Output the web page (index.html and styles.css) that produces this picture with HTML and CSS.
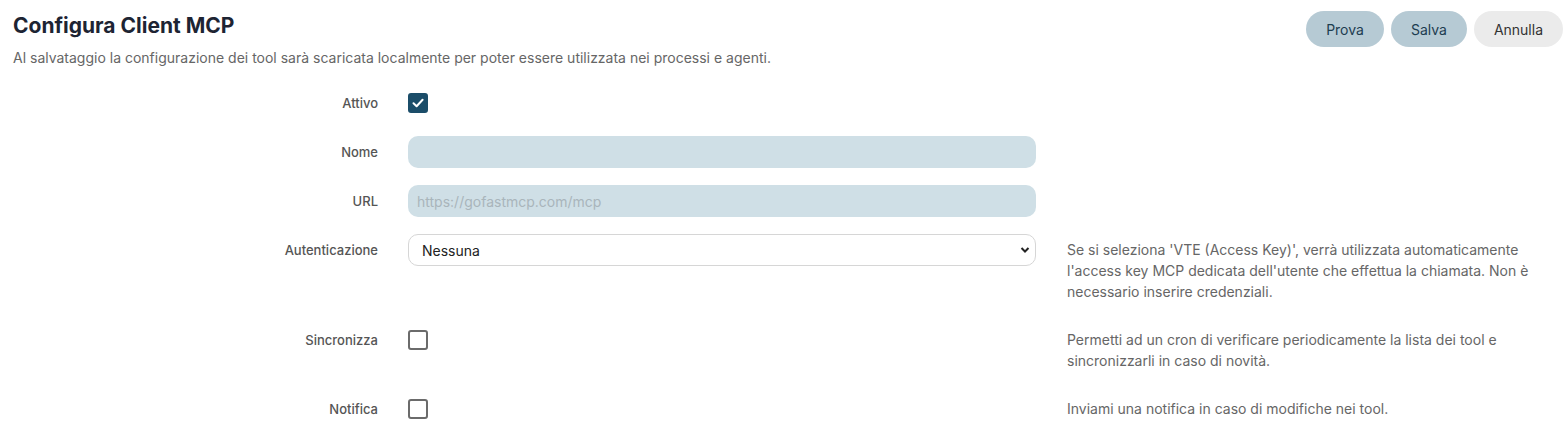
FILE: index.html
```html
<!DOCTYPE html>
<html lang="it">
<head>
    <meta charset="UTF-8">
    <meta name="viewport" content="width=device-width, initial-scale=1.0">
    <title>Configura Client MCP</title>
    <link rel="stylesheet" href="styles.css">
</head>
<body>
    <div class="header">
        <div class="titles">
            <h2>Configura Client MCP</h2>
            <p class="subtitle">Al salvataggio la configurazione dei tool sarà scaricata localmente per poter essere utilizzata nei processi e agenti.</p>
        </div>
        <div class="actions">
            <button class="btn btn-primary">Prova</button>
            <button class="btn btn-primary">Salva</button>
            <button class="btn btn-light">Annulla</button>
        </div>
    </div>

    <div class="form">
        <div class="row">
            <label class="row-label">Attivo</label>
            <div class="control check-wrap">
                <span class="check checked">
                    <svg width="14" height="14" viewBox="0 0 14 14"><path d="M2.5 7.3 L5.6 10.2 L11.6 3.8" fill="none" stroke="#fff" stroke-width="2" stroke-linecap="round" stroke-linejoin="round"/></svg>
                </span>
            </div>
            <div class="help"></div>
        </div>
        <div class="row">
            <label class="row-label">Nome</label>
            <div class="control"><input type="text" class="field"></div>
            <div class="help"></div>
        </div>
        <div class="row">
            <label class="row-label">URL</label>
            <div class="control"><input type="text" class="field" placeholder="https://gofastmcp.com/mcp"></div>
            <div class="help"></div>
        </div>
        <div class="row">
            <label class="row-label">Autenticazione</label>
            <div class="control select-wrap">
                <select class="select">
                    <option selected>Nessuna</option>
                    <option>VTE (Access Key)</option>
                </select>
                <svg class="chevron" width="10" height="8" viewBox="0 0 10 8"><path d="M1.5 2 L5 5.5 L8.5 2" fill="none" stroke="#222" stroke-width="2"/></svg>
            </div>
            <div class="help text">Se si seleziona 'VTE (Access Key)', verrà utilizzata automaticamente l'access key MCP dedicata dell'utente che effettua la chiamata. Non è necessario inserire credenziali.</div>
        </div>
        <div class="row">
            <label class="row-label">Sincronizza</label>
            <div class="control check-wrap"><span class="check"></span></div>
            <div class="help text">Permetti ad un cron di verificare periodicamente la lista dei tool e sincronizzarli in caso di novità.</div>
        </div>
        <div class="row">
            <label class="row-label">Notifica</label>
            <div class="control check-wrap"><span class="check"></span></div>
            <div class="help text">Inviami una notifica in caso di modifiche nei tool.</div>
        </div>
    </div>
</body>
</html>
```

FILE: styles.css
```css
body {
    font-family: Inter, "Noto Sans", sans-serif;
    background-color: #fff;
    color: #333;
    margin: 0;
    padding: 0 4px 0 13px;
}
.header {
    display: flex;
    justify-content: space-between;
    align-items: flex-start;
    padding-top: 11px;
    height: 76px;
}
h2 {
    font-size: 21px;
    font-weight: 700;
    color: #1d2433;
    margin: 2px 0 0;
    line-height: 26px;
}
.subtitle {
    font-size: 14px;
    color: #666;
    margin: 10px 0 0;
    line-height: 18px;
}
.actions {
    display: flex;
    gap: 7px;
    margin-right: -1px;
}
.btn {
    height: 36px;
    padding: 0 20px;
    border: none;
    border-radius: 18px;
    font-family: inherit;
    font-size: 14px;
    cursor: pointer;
}
.btn-primary {
    background-color: #b6cad4;
    color: #1d3d50;
}
.btn-light {
    background-color: #ebebeb;
    color: #333;
}
.form {
    display: flex;
    flex-direction: column;
    gap: 17px;
}
.row {
    display: grid;
    grid-template-columns: 365px 628px 1fr;
    column-gap: 30px;
    align-items: start;
}
.row-label {
    text-align: right;
    font-size: 13px;
    font-weight: 500;
    color: #555;
    line-height: 32px;
}
.control {
    height: 32px;
}
.help {
    margin-left: 1px;
}
.help.text {
    padding-top: 5px;
    padding-bottom: 5px;
    font-size: 14px;
    line-height: 21px;
    color: #666;
    padding-right: 10px;
}
.check-wrap {
    display: flex;
    align-items: center;
}
.check {
    width: 20px;
    height: 20px;
    box-sizing: border-box;
    border: 2px solid #6b6b6b;
    border-radius: 3px;
    display: flex;
    align-items: center;
    justify-content: center;
}
.check.checked {
    background-color: #1b4d69;
    border-color: #1b4d69;
}
.field {
    width: 100%;
    height: 32px;
    box-sizing: border-box;
    background-color: #cfdfe6;
    border: none;
    border-radius: 10px;
    padding: 0 9px;
    font-family: inherit;
    font-size: 14px;
    color: #333;
}
.field::placeholder {
    color: #a9b5bb;
}
.select-wrap {
    position: relative;
}
.select {
    width: 100%;
    height: 32px;
    box-sizing: border-box;
    appearance: none;
    background: #fff;
    border: 1px solid #d6d6d6;
    border-radius: 10px;
    padding: 0 13px;
    font-family: inherit;
    font-size: 14px;
    color: #222;
}
.chevron {
    position: absolute;
    right: 6px;
    top: 12px;
    pointer-events: none;
}
```
